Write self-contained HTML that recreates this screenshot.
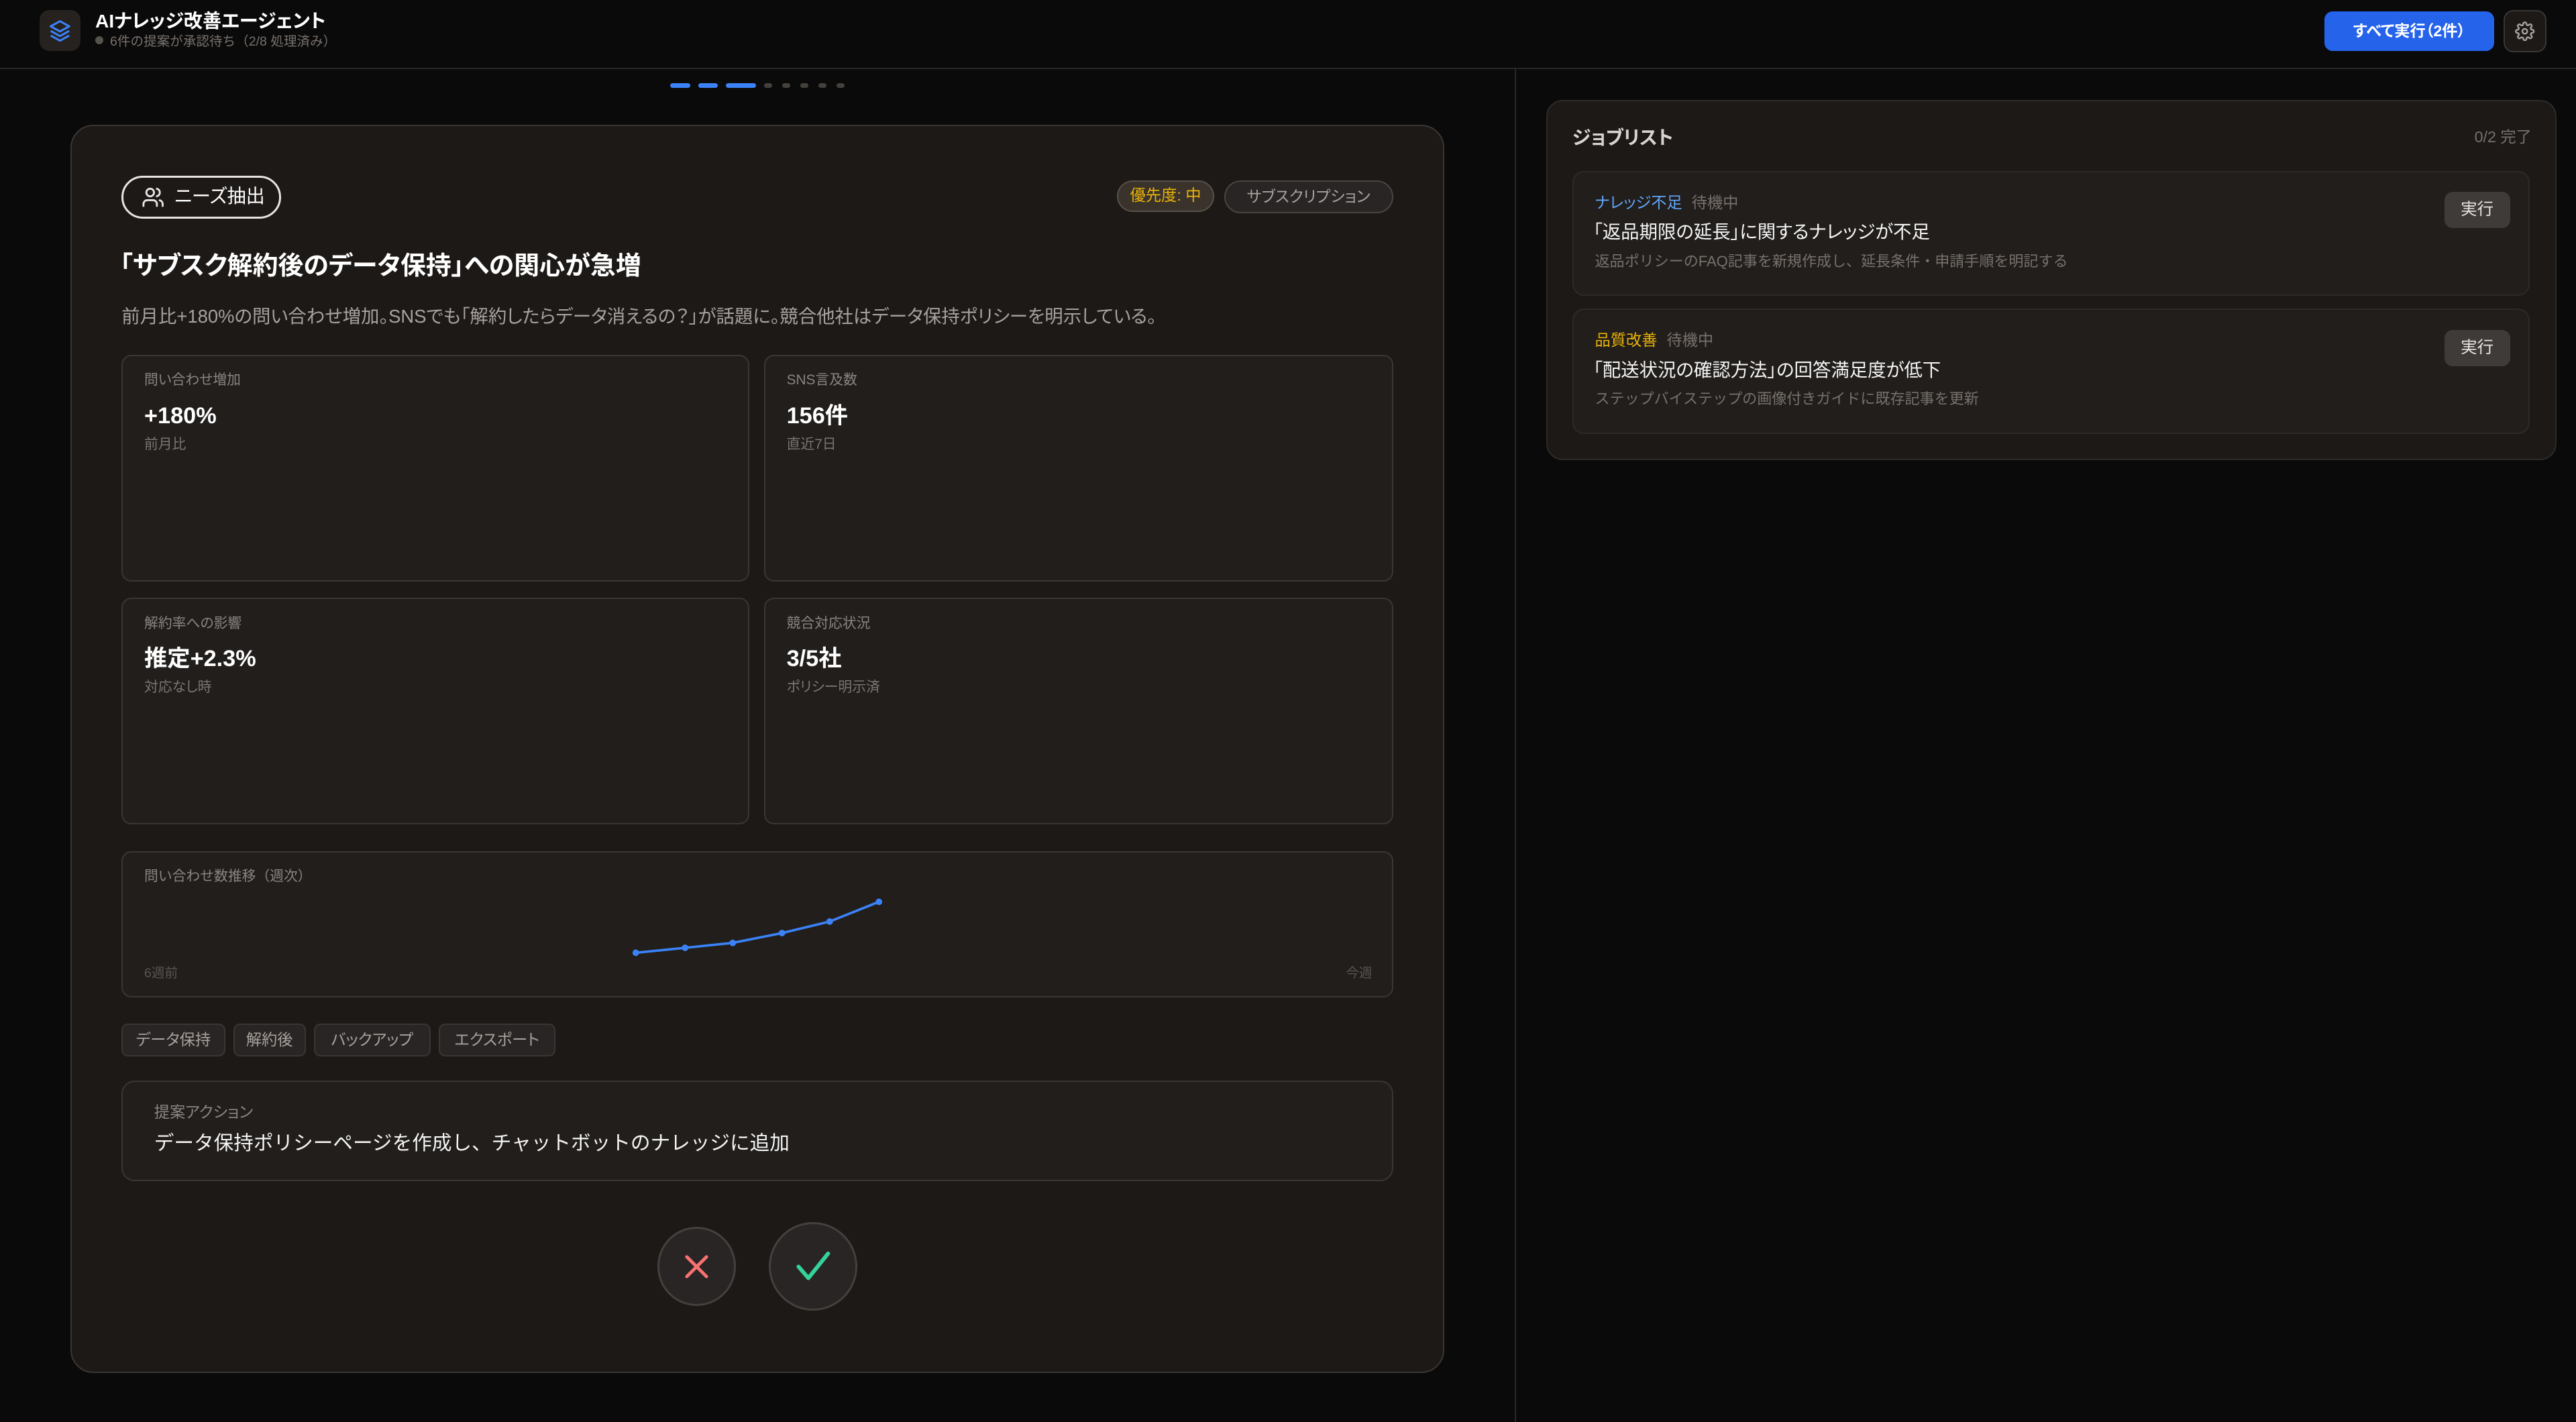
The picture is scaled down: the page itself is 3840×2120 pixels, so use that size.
<!DOCTYPE html>
<html><head><meta charset="utf-8">
<style>
*{box-sizing:border-box;margin:0;padding:0}
html,body{width:3840px;height:2120px;overflow:hidden;background:#0a0a0a}
#w{zoom:2.4490;width:1568px;height:866px;position:relative;font-family:"Liberation Sans","Noto Sans CJK JP",sans-serif;color:#e7e5e4;font-feature-settings:"palt";line-height:1.2}
.np{font-feature-settings:normal}
.a{position:absolute;white-space:nowrap}
.box{position:absolute;background:#211e1c;border:1px solid #3a3633;border-radius:6px}
.lbl{position:absolute;font-size:8.5px;color:#8a8580}
.val{position:absolute;font-size:14px;font-weight:bold;color:#fff;line-height:17px}
.sub{position:absolute;font-size:8.5px;color:#7a7570}
.tag{position:absolute;top:623px;height:20px;border:1px solid #3a3633;background:#292524;border-radius:4px;font-size:9.5px;color:#a8a29e;line-height:18px;text-align:center}
.job{position:absolute;left:957px;width:583px;height:76px;background:#211e1c;border:1px solid #2e2a27;border-radius:7px}
.run{position:absolute;left:530px;top:12px;width:40px;height:22px;background:#3f3b38;border-radius:5px;font-size:10px;color:#e7e5e4;text-align:center;line-height:22px}
</style></head><body><div id="w">
<!-- header -->
<div class="a" style="left:0;top:0;width:1568px;height:42px;border-bottom:1px solid #2a2725"></div>
<div class="a" style="left:24px;top:6px;width:25px;height:25px;background:#26221f;border-radius:6px"></div>
<svg class="a" style="left:29px;top:11px" width="15" height="15" viewBox="0 0 24 24" fill="none" stroke="#3b82f6" stroke-width="2" stroke-linejoin="round"><path d="M12 3L3 8l9 5 9-5z"/><path d="M3 12.5l9 5 9-5"/><path d="M3 17l9 5 9-5"/></svg>
<div class="a" style="left:58px;top:6px;font-size:11.5px;font-weight:bold;color:#fff">AIナレッジ改善エージェント</div>
<div class="a np" style="left:58px;top:21px;font-size:8px;color:#78716c"><span style="display:inline-block;width:5px;height:5px;border-radius:50%;background:#57534e;margin-right:4px;vertical-align:1px"></span>6件の提案が承認待ち（2/8 処理済み）</div>
<div class="a" style="left:1415px;top:7px;width:103px;height:24px;background:#2563eb;border-radius:5px;color:#fff;font-size:9.5px;font-weight:bold;text-align:center;line-height:24px">すべて実行（2件）</div>
<div class="a" style="left:1524px;top:6px;width:26px;height:26px;background:#1c1917;border:1px solid #3a3633;border-radius:6px"></div>
<svg class="a" style="left:1531px;top:13px" width="12" height="12" viewBox="0 0 24 24" fill="none" stroke="#a8a29e" stroke-width="2"><circle cx="12" cy="12" r="3"/><path d="M19.4 15a1.7 1.7 0 0 0 .3 1.8l.1.1a2 2 0 1 1-2.8 2.8l-.1-.1a1.7 1.7 0 0 0-1.8-.3 1.7 1.7 0 0 0-1 1.5V21a2 2 0 1 1-4 0v-.1a1.7 1.7 0 0 0-1.1-1.5 1.7 1.7 0 0 0-1.8.3l-.1.1a2 2 0 1 1-2.8-2.8l.1-.1a1.7 1.7 0 0 0 .3-1.8 1.7 1.7 0 0 0-1.5-1H3a2 2 0 1 1 0-4h.1a1.7 1.7 0 0 0 1.5-1.1 1.7 1.7 0 0 0-.3-1.8l-.1-.1a2 2 0 1 1 2.8-2.8l.1.1a1.7 1.7 0 0 0 1.8.3H9a1.7 1.7 0 0 0 1-1.5V3a2 2 0 1 1 4 0v.1a1.7 1.7 0 0 0 1 1.5 1.7 1.7 0 0 0 1.8-.3l.1-.1a2 2 0 1 1 2.8 2.8l-.1.1a1.7 1.7 0 0 0-.3 1.8V9a1.7 1.7 0 0 0 1.5 1H21a2 2 0 1 1 0 4h-.1a1.7 1.7 0 0 0-1.5 1z"/></svg>
<div class="a" style="left:922px;top:42px;width:1px;height:824px;background:#2a2725"></div>
<!-- dots -->
<div class="a" style="left:408px;top:50.5px;width:12px;height:3px;border-radius:2px;background:#3b82f6"></div>
<div class="a" style="left:425px;top:50.5px;width:12px;height:3px;border-radius:2px;background:#3b82f6"></div>
<div class="a" style="left:442px;top:50.5px;width:18px;height:3px;border-radius:2px;background:#3b82f6"></div>
<div class="a" style="left:465px;top:50.5px;width:5px;height:3px;border-radius:2px;background:#44403c"></div>
<div class="a" style="left:476px;top:50.5px;width:5px;height:3px;border-radius:2px;background:#44403c"></div>
<div class="a" style="left:487px;top:50.5px;width:5px;height:3px;border-radius:2px;background:#44403c"></div>
<div class="a" style="left:498px;top:50.5px;width:5px;height:3px;border-radius:2px;background:#44403c"></div>
<div class="a" style="left:509px;top:50.5px;width:5px;height:3px;border-radius:2px;background:#44403c"></div>
<!-- main card -->
<div class="a" style="left:43px;top:76px;width:836px;height:760px;background:#1c1917;border:1px solid #3a3633;border-radius:14px"></div>
<div class="a" style="left:74px;top:107px;width:97px;height:26px;border:1.5px solid #e7e5e4;border-radius:13px;font-size:11.5px;color:#fff;line-height:23px;padding-left:31px">ニーズ抽出</div>
<svg class="a" style="left:86px;top:113px" width="14" height="14" viewBox="0 0 24 24" fill="none" stroke="#e7e5e4" stroke-width="2" stroke-linecap="round"><circle cx="9" cy="7" r="4"/><path d="M2 21v-2a4 4 0 0 1 4-4h6a4 4 0 0 1 4 4v2"/><path d="M16 3.1a4 4 0 0 1 0 7.8"/><path d="M22 21v-2a4 4 0 0 0-3-3.9"/></svg>
<div class="a" style="left:680px;top:110px;width:59px;height:19px;background:#3a332b;border:1px solid #57504a;border-radius:10px;font-size:9.5px;color:#eab308;text-align:center;line-height:17px">優先度: 中</div>
<div class="a" style="left:745px;top:110px;width:103px;height:20px;background:#292524;border:1px solid #4a4541;border-radius:10px;font-size:9.5px;color:#a8a29e;text-align:center;line-height:18px">サブスクリプション</div>
<div class="a" style="left:73px;top:153px;font-size:15.5px;font-weight:bold;color:#fff">「サブスク解約後のデータ保持」への関心が急増</div>
<div class="a" style="left:74px;top:186px;font-size:11.2px;color:#a8a29e">前月比+180%の問い合わせ増加。SNSでも「解約したらデータ消えるの？」が話題に。競合他社はデータ保持ポリシーを明示している。</div>
<div class="box" style="left:74px;top:216px;width:382px;height:138px"><div class="lbl" style="left:13px;top:10px">問い合わせ増加</div><div class="val" style="left:13px;top:28px">+180%</div><div class="sub" style="left:13px;top:49px">前月比</div></div>
<div class="box" style="left:465px;top:216px;width:383px;height:138px"><div class="lbl" style="left:13px;top:10px">SNS言及数</div><div class="val" style="left:13px;top:28px">156件</div><div class="sub" style="left:13px;top:49px">直近7日</div></div>
<div class="box" style="left:74px;top:364px;width:382px;height:138px"><div class="lbl" style="left:13px;top:10px">解約率への影響</div><div class="val" style="left:13px;top:28px">推定+2.3%</div><div class="sub" style="left:13px;top:49px">対応なし時</div></div>
<div class="box" style="left:465px;top:364px;width:383px;height:138px"><div class="lbl" style="left:13px;top:10px">競合対応状況</div><div class="val" style="left:13px;top:28px">3/5社</div><div class="sub" style="left:13px;top:49px">ポリシー明示済</div></div>
<div class="box" style="left:74px;top:518px;width:774px;height:89px"><div class="lbl np" style="left:13px;top:10px">問い合わせ数推移（週次）</div><div class="sub" style="left:13px;top:69px;font-size:8px;color:#5a5550">6週前</div><div class="sub" style="right:12px;top:69px;font-size:8px;color:#5a5550">今週</div></div>
<svg class="a" style="left:0;top:0" width="1568" height="866"><polyline points="387,580 417,577 446,574 476,568 505,561 535,549" fill="none" stroke="#3b82f6" stroke-width="1.5"/><g fill="#3b82f6"><circle cx="387" cy="580" r="2"/><circle cx="417" cy="577" r="2"/><circle cx="446" cy="574" r="2"/><circle cx="476" cy="568" r="2"/><circle cx="505" cy="561" r="2"/><circle cx="535" cy="549" r="2"/></g></svg>
<div class="tag" style="left:74px;width:63px">データ保持</div>
<div class="tag" style="left:142px;width:44px">解約後</div>
<div class="tag" style="left:191px;width:71px">バックアップ</div>
<div class="tag" style="left:267px;width:71px">エクスポート</div>
<div class="box" style="left:74px;top:658px;width:774px;height:61px;border-radius:8px"><div class="a" style="left:19px;top:13px;font-size:9.5px;color:#8a8580">提案アクション</div><div class="a np" style="left:19px;top:30px;font-size:12.1px;color:#f5f5f4">データ保持ポリシーページを作成し、チャットボットのナレッジに追加</div></div>
<div class="a" style="left:400px;top:747px;width:48px;height:48px;border-radius:50%;background:#292524;border:1.5px solid #44403c"></div>
<svg class="a" style="left:414px;top:761px" width="20" height="20" viewBox="0 0 20 20" stroke="#f87171" stroke-width="2" stroke-linecap="round"><path d="M4 4l12 12M16 4L4 16"/></svg>
<div class="a" style="left:468px;top:744px;width:54px;height:54px;border-radius:50%;background:#292524;border:1.5px solid #44403c"></div>
<svg class="a" style="left:483px;top:759px" width="24" height="24" viewBox="0 0 24 24" fill="none" stroke="#34d399" stroke-width="2.4" stroke-linecap="round" stroke-linejoin="round"><path d="M3 12l6 7L21 4"/></svg>
<!-- right panel -->
<div class="a" style="left:941px;top:61px;width:615px;height:219px;background:#1c1917;border:1px solid #2e2a27;border-radius:10px"></div>
<div class="a" style="left:957px;top:77px;font-size:11.5px;font-weight:bold;color:#d6d3d1">ジョブリスト</div>
<div class="a" style="left:1490px;top:78px;width:51px;text-align:right;font-size:9.5px;color:#78716c">0/2 完了</div>
<div class="job" style="top:104px"><div class="a" style="left:13px;top:13px;font-size:9.5px"><span style="color:#60a5fa">ナレッジ不足</span> <span style="color:#78716c;margin-left:3px">待機中</span></div><div class="a" style="left:12px;top:30px;font-size:11.2px;color:#f5f5f4">「返品期限の延長」に関するナレッジが不足</div><div class="a np" style="left:13px;top:49px;font-size:9px;color:#78716c">返品ポリシーのFAQ記事を新規作成し、延長条件・申請手順を明記する</div><div class="run">実行</div></div>
<div class="job" style="top:188px"><div class="a" style="left:13px;top:13px;font-size:9.5px"><span style="color:#eab308">品質改善</span> <span style="color:#78716c;margin-left:3px">待機中</span></div><div class="a" style="left:12px;top:30px;font-size:11.2px;color:#f5f5f4">「配送状況の確認方法」の回答満足度が低下</div><div class="a np" style="left:13px;top:49px;font-size:9px;color:#78716c">ステップバイステップの画像付きガイドに既存記事を更新</div><div class="run">実行</div></div>
</div></body></html>
